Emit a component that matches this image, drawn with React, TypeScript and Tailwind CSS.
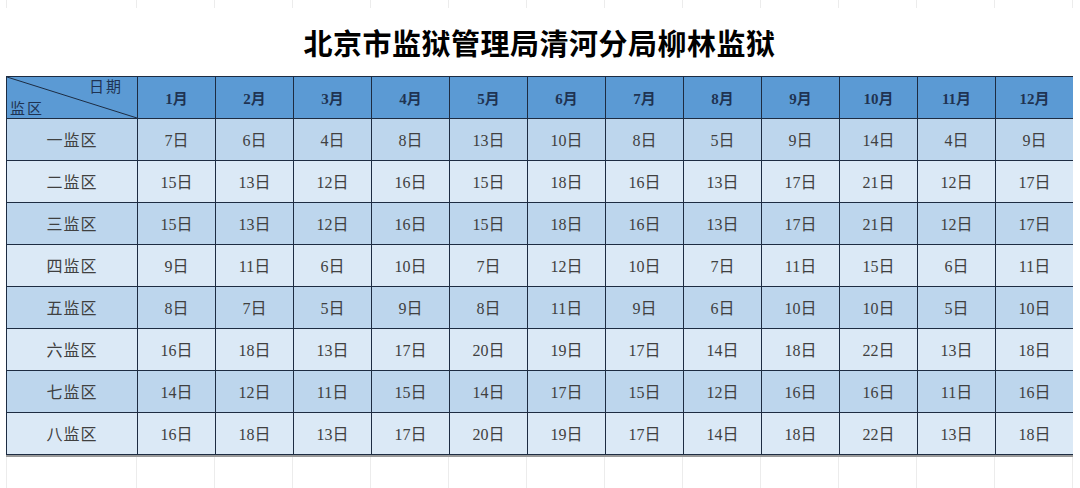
import React from "react";

const months = ["1月","2月","3月","4月","5月","6月","7月","8月","9月","10月","11月","12月"];
const rows: [string, number[]][] = [
  ["一监区", [7,6,4,8,13,10,8,5,9,14,4,9]],
  ["二监区", [15,13,12,16,15,18,16,13,17,21,12,17]],
  ["三监区", [15,13,12,16,15,18,16,13,17,21,12,17]],
  ["四监区", [9,11,6,10,7,12,10,7,11,15,6,11]],
  ["五监区", [8,7,5,9,8,11,9,6,10,10,5,10]],
  ["六监区", [16,18,13,17,20,19,17,14,18,22,13,18]],
  ["七监区", [14,12,11,15,14,17,15,12,16,16,11,16]],
  ["八监区", [16,18,13,17,20,19,17,14,18,22,13,18]],
];

const cellFont = { fontFamily: '"Liberation Serif", "Noto Sans CJK SC", serif' };

function FaintStrip({ h }: { h: string }) {
  return (
    <div className={`grid grid-cols-[131px_repeat(12,78px)] ${h}`}>
      {Array.from({ length: 13 }).map((_, i) => (
        <div key={i} className={`border-r border-[#ececec] ${i === 0 ? "border-l" : ""}`} />
      ))}
    </div>
  );
}

export default function App() {
  return (
    <div className="w-[1080px] h-[488px] bg-white overflow-hidden flex flex-col pl-[6px]" style={cellFont}>
      <FaintStrip h="h-[8px]" />
      <div className="h-[68px] w-[1067px] flex items-center justify-center">
        <h1
          className="text-[29px] font-bold text-black leading-none tracking-[0.5px]"
          style={{ fontFamily: '"Noto Sans CJK SC", sans-serif' }}
        >
          北京市监狱管理局清河分局柳林监狱
        </h1>
      </div>
      <div className="w-[1067px] bg-[#1d2c42] p-px grid grid-cols-[130px_repeat(12,77px)] auto-rows-[41px] gap-px">
        <div className="relative bg-[#5b9ad4]">
          <svg className="absolute inset-0" width="130" height="41" viewBox="0 0 130 41">
            <line x1="0" y1="0" x2="130" y2="41" stroke="#1d2c42" strokeWidth="1" />
          </svg>
          <span className="absolute right-[14px] top-[3px] text-[15px] leading-none text-[#1f3352] tracking-[2px]">日期</span>
          <span className="absolute left-[3px] bottom-[1px] text-[15px] leading-none text-[#1f3352] tracking-[2px]">监区</span>
        </div>
        {months.map((m) => (
          <div key={m} className="bg-[#5b9ad4] flex items-center justify-center pt-[3px] text-[15px] font-semibold text-[#1f3352]">
            {m}
          </div>
        ))}
        {rows.map(([name, vals], ri) => {
          const bg = ri % 2 === 0 ? "bg-[#bdd6ed]" : "bg-[#dbe9f6]";
          return (
            <React.Fragment key={name}>
              <div className={`${bg} flex items-center justify-center pt-[3px] text-[16px] text-[#404040] tracking-[1px]`}>{name}</div>
              {vals.map((v, ci) => (
                <div key={ci} className={`${bg} flex items-center justify-center pt-[3px] text-[16px] text-[#404040]`}>
                  {v}日
                </div>
              ))}
            </React.Fragment>
          );
        })}
      </div>
      <div className="w-[1067px] h-[2px] bg-[#9a9a9a]" />
      <FaintStrip h="flex-1" />
    </div>
  );
}
